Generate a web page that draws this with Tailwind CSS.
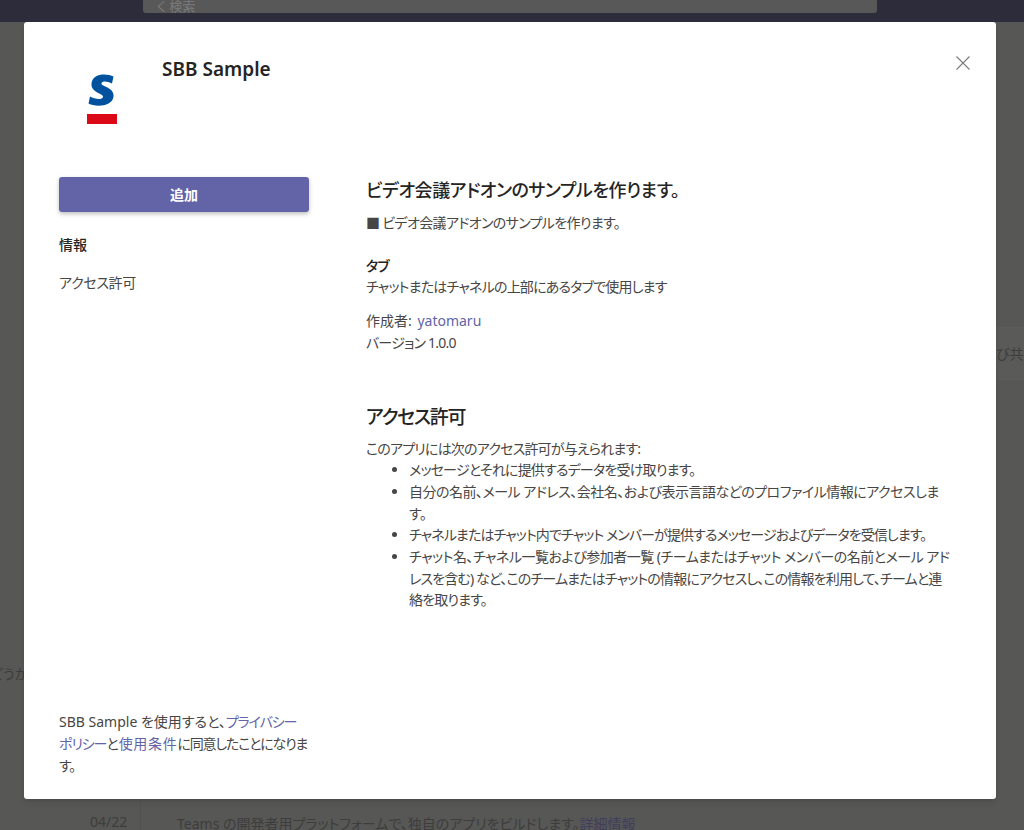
<!DOCTYPE html>
<html lang="ja">
<head>
  <meta charset="UTF-8" />
  <title>SBB Sample</title>
  <script src="https://cdn.jsdelivr.net/npm/@tailwindcss/browser@4"></script>
</head>
<body class="relative h-[830px] w-[1024px] overflow-hidden bg-[#575756] font-['Noto_Sans','Noto_Sans_CJK_JP',sans-serif] text-[14px] text-[#252423] [font-feature-settings:'palt']">

  <!-- Dimmed page behind the dialog -->
  <header class="flex h-[22px] justify-center bg-[#2d2c3a]">
    <div class="mr-[4px] flex h-[13px] w-[734px] items-end overflow-hidden rounded-b-[3px] bg-[#585858] pl-[14px] text-[13px] leading-[13px] text-[#7b7b7b]">く 検索</div>
  </header>
  <div class="absolute left-[-10px] top-[664px] text-[14px] leading-[20px] text-[#3d3d3c]">どうか</div>
  <div class="absolute right-0 top-[327px] flex h-[53px] w-[28px] items-center justify-start overflow-hidden whitespace-nowrap border-y border-[#5c5c5b] bg-[#5a5a59] text-[14px] text-[#3d3d3c]">び共</div>
  <div class="absolute left-[90px] top-[812px] text-[14px] leading-[20px] text-[#3d3d3c]">04/22</div>
  <div class="absolute left-[140px] top-[799px] h-[31px] w-px bg-[#515150]"></div>
  <div class="absolute left-[177px] top-[814px] text-[14px] leading-[20px] text-[#3d3d3c]">Teams の開発者用プラットフォームで、独自のアプリをビルドします。<span class="text-[#3f3e5c]">詳細情報</span></div>

  <!-- Dialog -->
  <div class="absolute left-[24px] top-[22px] flex h-[777px] w-[972px] flex-col rounded-[3px] bg-white shadow-md">
    <div class="flex h-[155px] shrink-0">
      <div class="flex w-[138px] shrink-0 pl-[63px] pt-[52px]">
        <svg width="30" height="50" viewBox="0 0 30 50">
          <path d="M26.5 2.5 L25 9.5 C21 7.5 15 6.5 14.5 9.5 C14 12.5 27.5 13 26.5 22.5 C25.5 32.5 9 33.5 1.5 29.5 L3 22.5 C7 25 15 26.5 16 23 C17 19.5 3.5 18.5 4.5 9.5 C5.5 -1 20 -1 26.5 2.5 Z" fill="#00529f" />
          <rect x="0" y="40" width="30" height="10" fill="#dc0a17" />
        </svg>
      </div>
      <h1 class="pt-[35px] text-[19px] font-semibold leading-[24px]">SBB Sample</h1>
      <button class="ml-auto mr-[26px] mt-[34px] h-[14px] w-[14px] self-start">
        <svg width="14" height="14" viewBox="0 0 14 14" fill="none" stroke="#7a7a7a" stroke-width="1.1"><path d="M0.5 0.5 13.5 13.5M13.5 0.5 0.5 13.5" /></svg>
      </button>
    </div>

    <div class="flex min-h-0 flex-1">
      <!-- Left column -->
      <aside class="ml-[35px] flex w-[250px] shrink-0 flex-col pb-[22px]">
        <button class="h-[35px] rounded-[3px] bg-[#6264a7] text-[14px] font-semibold text-white shadow-[0_2px_4px_rgba(0,0,0,0.25)]">追加</button>
        <div class="mt-[23px] font-medium leading-[20px]">情報</div>
        <div class="mt-[18px] leading-[20px] tracking-[-0.3px] text-[#484644]">アクセス許可</div>
        <p class="mt-auto leading-[22px] text-[#484644]">SBB Sample を使用すると、<a class="tracking-[-1.1px] text-[#6264a7]">プライバシー ポリシー</a>と<a class="tracking-[0.7px] text-[#6264a7]">使用条件</a><span class="tracking-[-1.2px]">に同意したことになります。</span></p>
      </aside>

      <!-- Right column -->
      <main class="ml-[57px] w-[587px] leading-[21.7px] tracking-[-0.8px]">
        <h2 class="text-[18px] font-medium leading-[26px] tracking-[-0.45px]">ビデオ会議アドオンのサンプルを作ります。</h2>
        <p class="mt-[9px] tracking-[-0.65px] text-[#484644]">■ ビデオ会議アドオンのサンプルを作ります。</p>
        <h3 class="mt-[21px] font-medium">タブ</h3>
        <p class="text-[#484644]">チャットまたはチャネルの上部にあるタブで使用します</p>
        <p class="mt-[12px] tracking-normal text-[#484644]">作成者: <a class="ml-[2px] text-[#6264a7]">yatomaru</a></p>
        <p class="text-[#484644]">バージョン 1.0.0</p>
        <h2 class="mt-[49px] text-[19px] font-medium leading-[28px] tracking-[-1.3px]">アクセス許可</h2>
        <p class="mt-[7px] text-[#484644]">このアプリには次のアクセス許可が与えられます:</p>
        <ul class="list-disc pl-[43px] text-[#484644]">
          <li>メッセージとそれに提供するデータを受け取ります。</li>
          <li class="tracking-[-0.5px]">自分の名前、メール アドレス、会社名、および表示言語などのプロファイル情報にアクセスします。</li>
          <li class="tracking-[-0.9px]">チャネルまたはチャット内でチャット メンバーが提供するメッセージおよびデータを受信します。</li>
          <li class="tracking-[-0.5px]">チャット名、チャネル一覧および参加者一覧 (チームまたはチャット メンバーの名前とメール アド<span class="tracking-[-0.85px]">レスを含む) など、このチームまたはチャットの情報にアクセスし、この情報を利用して、チームと連絡を取ります。</span></li>
        </ul>
      </main>
    </div>
  </div>
</body>
</html>
